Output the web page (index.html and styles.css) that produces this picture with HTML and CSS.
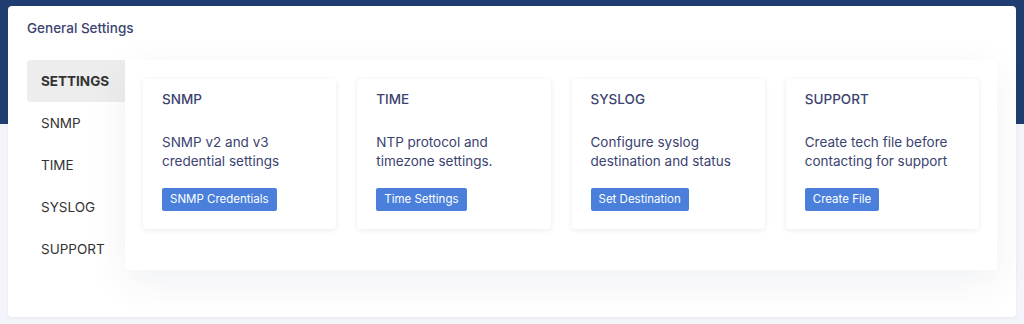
FILE: index.html
```html
<!DOCTYPE html>
<html lang="en">
<head>
    <meta charset="UTF-8">
    <meta name="viewport" content="width=device-width, initial-scale=1.0">
    <title>General Settings</title>
    <link rel="stylesheet" href="styles.css">
</head>
<body>
    <div class="page">
        <div class="main-card">
            <h2 class="card-header">General Settings</h2>

            <div class="settings-row">
                <ul class="side-nav">
                    <li class="active">SETTINGS</li>
                    <li>SNMP</li>
                    <li>TIME</li>
                    <li>SYSLOG</li>
                    <li>SUPPORT</li>
                </ul>

                <div class="panel">
                    <div class="tile">
                        <h3>SNMP</h3>
                        <p>SNMP v2 and v3 credential settings</p>
                        <button>SNMP Credentials</button>
                    </div>
                    <div class="tile">
                        <h3>TIME</h3>
                        <p>NTP protocol and timezone settings.</p>
                        <button>Time Settings</button>
                    </div>
                    <div class="tile">
                        <h3>SYSLOG</h3>
                        <p>Configure syslog destination and status</p>
                        <button>Set Destination</button>
                    </div>
                    <div class="tile">
                        <h3>SUPPORT</h3>
                        <p>Create tech file before contacting for support</p>
                        <button>Create File</button>
                    </div>
                </div>
            </div>
        </div>
    </div>
</body>
</html>
```

FILE: styles.css
```css
/* Page */
html {
    background: #f4f5fa;
}
body {
    margin: 0;
    min-height: 324px;
    font-family: Inter, "Noto Sans", sans-serif;
    background: linear-gradient(#203d72 0, #203d72 124px, #f4f5fa 124px) no-repeat;
    color: #3b4371;
}
.page {
    padding: 6px 8px 0;
}
.main-card {
    height: 311px;
    box-sizing: border-box;
    padding: 0 19px;
    background: #fff;
    border-radius: 4px;
    box-shadow: 0 1px 3px rgba(30, 40, 90, 0.06);
}
.card-header {
    margin: 0;
    padding: 12px 0 22px;
    font-size: 13.5px;
    font-weight: 500;
    line-height: 20px;
    color: #3b4371;
}

/* Side navigation */
.settings-row {
    display: flex;
}
.side-nav {
    list-style: none;
    margin: 0;
    padding: 0;
    width: 98px;
    flex-shrink: 0;
}
.side-nav li {
    height: 42px;
    line-height: 42px;
    padding-left: 14px;
    font-size: 13.5px;
    color: #333;
}
.side-nav li.active {
    background: #ededed;
    border-radius: 4px 0 0 4px;
    font-weight: 700;
}

/* Tiles */
.panel {
    flex: 1;
    display: grid;
    grid-template-columns: repeat(4, 1fr);
    gap: 21px;
    padding: 19px 18px 39px;
    background: #fff;
    border-radius: 3px;
    box-shadow: 0 12px 40px rgba(40, 50, 100, 0.07);
}
.tile {
    height: 150px;
    box-sizing: border-box;
    padding: 12px 19px;
    background: #fff;
    border-radius: 4px;
    box-shadow: 0 1px 5px rgba(40, 50, 100, 0.1);
}
.tile h3 {
    margin: 0 0 25px;
    font-size: 13.5px;
    font-weight: 500;
    line-height: 17px;
    color: #3b4371;
}
.tile p {
    margin: 0 0 16px;
    font-size: 13.5px;
    line-height: 19px;
    color: #3b4371;
}
.tile button {
    height: 23px;
    padding: 0 8px;
    border: none;
    border-radius: 2px;
    background: #4a7fdb;
    color: #fff;
    font-family: inherit;
    font-size: 11.5px;
    cursor: pointer;
}
```
